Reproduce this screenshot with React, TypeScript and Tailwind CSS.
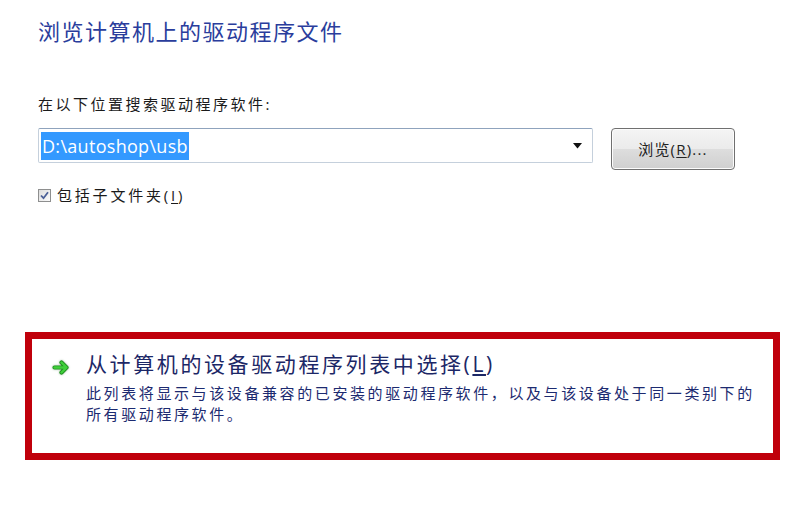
import React from "react";

const FONT = "font-['Open_Sans','Noto_Sans_CJK_SC',sans-serif]";

export default function App() {
  return (
    <div className={`w-[800px] h-[515px] bg-white overflow-hidden ${FONT}`}>
      <div className="pl-[38px]">
        <div className="mt-[15px] h-[32px] leading-[32px] text-[22px] tracking-[1.5px] text-[#2a3d9c]">
          浏览计算机上的驱动程序文件
        </div>
        <div className="pt-[47px] h-[67px] leading-[20px] text-[15px] tracking-[2.5px] text-[#1a1a1a]">
          在以下位置搜索驱动程序软件:
        </div>
        <div className="mt-[14px] flex items-start">
          <div className="w-[555px] h-[35px] border border-[#c5d0dc] border-t-[#8fa3bd] rounded-[2px] bg-white flex items-center pl-[2px] pr-[10px]">
            <span className="bg-[#3399ff] text-white text-[18px] leading-[28px] h-[28px] px-[1px] tracking-[0.3px] font-['Open_Sans',sans-serif]">
              D:\autoshop\usb
            </span>
            <div className="flex-1" />
            <svg width="9" height="6" viewBox="0 0 9 6">
              <path d="M0 0 H9 L4.5 5.5 Z" fill="#111" />
            </svg>
          </div>
          <button className="ml-[18px] w-[124px] h-[42px] rounded-[4px] border border-[#707070] bg-[linear-gradient(#f4f4f4_0%,#ebebeb_50%,#dddddd_51%,#cfcfcf_100%)] shadow-[inset_0_0_0_1px_#fcfcfc] text-[15px] tracking-[1.2px] text-[#222] flex items-center justify-center">
            浏览(<span className="underline underline-offset-2">R</span>)...
          </button>
        </div>
        <div className="mt-[15px] h-[20px] flex items-center">
          <div className="w-[13px] h-[13px] border border-[#8e8f8f] bg-[linear-gradient(135deg,#dcdcdc,#fbfbfb)] flex items-center justify-center">
            <svg width="9" height="9" viewBox="0 0 9 9">
              <path d="M1 4.5 L3.5 7.2 L8 1.2" stroke="#4a5f97" strokeWidth="1.8" fill="none" />
            </svg>
          </div>
          <span className="ml-[6px] text-[15px] leading-[20px] tracking-[2.8px] text-[#1a1a1a]">
            包括子文件夹(<span className="underline underline-offset-2">I</span>)
          </span>
        </div>
      </div>
      <div className="ml-[25px] mt-[127px] w-[755px] h-[128px] border-[7px] border-[#c0000b] bg-white flex items-start pl-[20px] pt-[11px]">
        <div className="h-[28px] flex items-center mt-[3px]">
          <svg width="19" height="17" viewBox="0 0 19 17" className="drop-shadow-[0_0_1px_rgba(0,80,0,0.35)]">
            <path d="M2.5 8.5 H14.5 M9.5 3.5 L14.5 8.5 L9.5 13.5" stroke="#1f8f1f" strokeWidth="4.2" strokeLinecap="round" strokeLinejoin="round" fill="none" />
            <path d="M2.5 8.5 H14.5 M9.5 3.5 L14.5 8.5 L9.5 13.5" stroke="#3fcf3a" strokeWidth="2.4" strokeLinecap="round" strokeLinejoin="round" fill="none" />
          </svg>
        </div>
        <div className="ml-[15px]">
          <div className="h-[28px] leading-[28px] text-[21px] tracking-[2.6px] text-[#1c2766]">
            从计算机的设备驱动程序列表中选择(<span className="underline underline-offset-2">L</span>)
          </div>
          <div className="mt-[5px] text-[15px] leading-[21px] tracking-[2.6px] text-[#1c2a70]">
            <div className="whitespace-nowrap">此列表将显示与该设备兼容的已安装的驱动程序软件，以及与该设备处于同一类别下的</div>
            <div className="whitespace-nowrap">所有驱动程序软件。</div>
          </div>
        </div>
      </div>
    </div>
  );
}
